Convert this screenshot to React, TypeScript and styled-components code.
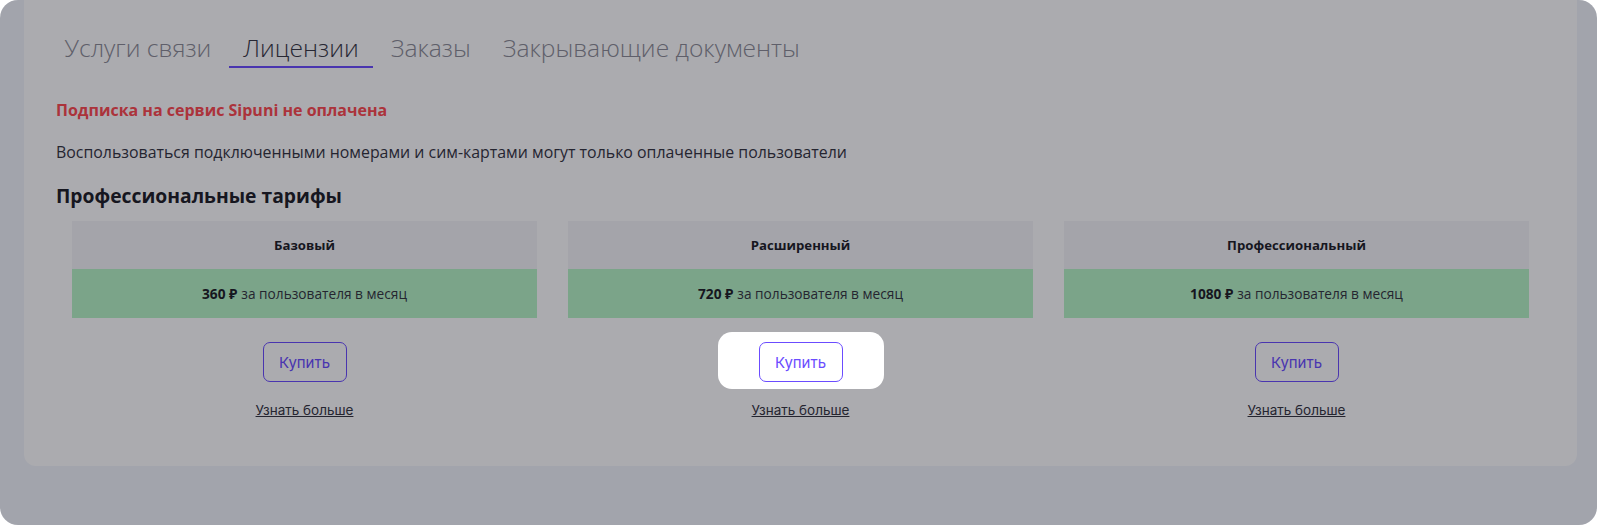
import React from 'react'
import styled, { createGlobalStyle } from 'styled-components'

const GlobalStyle = createGlobalStyle`
  html, body {
    margin: 0;
    padding: 0;
    background: #ffffff;
  }
  body {
    font-family: "Open Sans", "Noto Sans", sans-serif;
  }
`

const plans = [
  { name: 'Базовый', price: 360 },
  { name: 'Расширенный', price: 720, highlight: true },
  { name: 'Профессиональный', price: 1080 },
]

const tabs = ['Услуги связи', 'Лицензии', 'Заказы', 'Закрывающие документы']

const App = () => {
  return (
    <>
      <GlobalStyle />
      <Frame>
        <Card>
          <Tabs>
            {tabs.map((t) => (
              <Tab key={t} $active={t === 'Лицензии'}>
                {t}
              </Tab>
            ))}
          </Tabs>
          <Warning>Подписка на сервис Sipuni не оплачена</Warning>
          <Note>
            Воспользоваться подключенными номерами и сим-картами могут только оплаченные пользователи
          </Note>
          <Title>Профессиональные тарифы</Title>
          <Plans>
            {plans.map((p) => (
              <Plan key={p.name}>
                <PlanName>{p.name}</PlanName>
                <PlanPrice>
                  <b>{p.price} ₽</b> за пользователя в месяц
                </PlanPrice>
                <BuyWrap $highlight={!!p.highlight}>
                  <BuyButton type="button">Купить</BuyButton>
                </BuyWrap>
                <More href="#">Узнать больше</More>
              </Plan>
            ))}
          </Plans>
        </Card>
      </Frame>
    </>
  )
}

const Frame = styled.div`
  position: relative;
  width: 1597px;
  height: 525px;
  box-sizing: border-box;
  background: #f2f5fb;
  border-radius: 18px;
  overflow: hidden;
  padding: 0 20px 0 24px;
`

const Card = styled.div`
  background: #ffffff;
  border-radius: 0 0 12px 12px;
  padding: 32px 32px 47px 32px;
`

const Tabs = styled.div`
  display: flex;
  gap: 3px;
  margin-left: -6px;
`

const Tab = styled.div<{ $active: boolean }>`
  font-size: 24.6px;
  line-height: 32px;
  font-weight: 300;
  padding: 0 14.5px 2px;
  color: ${(p) => (p.$active ? '#373744' : '#8c8c96')};
  border-bottom: 2px solid ${(p) => (p.$active ? '#6b4cff' : 'transparent')};
  cursor: pointer;
`

const Warning = styled.div`
  margin-top: 32px;
  font-size: 16px;
  line-height: 20px;
  font-weight: 700;
  color: #ff4a50;
`

const Note = styled.div`
  margin-top: 22px;
  font-size: 15.9px;
  line-height: 20px;
  color: #34343f;
`

const Title = styled.h2`
  margin: 21px 0 0;
  font-size: 19.3px;
  line-height: 26px;
  font-weight: 700;
  color: #1d1d26;
`

const Plans = styled.div`
  display: grid;
  grid-template-columns: repeat(3, 1fr);
  column-gap: 31px;
  padding: 0 16px;
  margin-top: 12px;
`

const Plan = styled.div`
  display: flex;
  flex-direction: column;
  align-items: center;
`

const PlanName = styled.div`
  align-self: stretch;
  height: 48px;
  display: flex;
  align-items: center;
  justify-content: center;
  background: #f4f4f8;
  font-size: 13.2px;
  font-weight: 700;
  color: #1d1d26;
`

const PlanPrice = styled.div`
  align-self: stretch;
  height: 49px;
  display: flex;
  align-items: center;
  justify-content: center;
  gap: 4px;
  background: #b6f5c5;
  font-size: 13.7px;
  color: #34343f;
  b {
    font-weight: 700;
    color: #1d1d26;
  }
`

const BuyWrap = styled.div<{ $highlight: boolean }>`
  margin-top: 14px;
  padding: 10px 41px 7px;
  border-radius: 14px;
  position: relative;
  ${(p) =>
    p.$highlight &&
    `
    z-index: 10;
    background: #ffffff;
    box-shadow: 0 0 0 3000px rgba(9, 9, 21, 0.34);
  `}
`

const BuyButton = styled.button`
  width: 84px;
  height: 40px;
  border: 1px solid #6b4cff;
  border-radius: 7px;
  background: transparent;
  color: #6b4cff;
  font-family: Inter, "Open Sans", sans-serif;
  font-size: 15px;
  cursor: pointer;
`

const More = styled.a`
  margin-top: 12px;
  font-family: Inter, "Open Sans", sans-serif;
  font-size: 13.5px;
  line-height: 18px;
  color: #34343f;
  text-decoration: underline;
`

export default App
